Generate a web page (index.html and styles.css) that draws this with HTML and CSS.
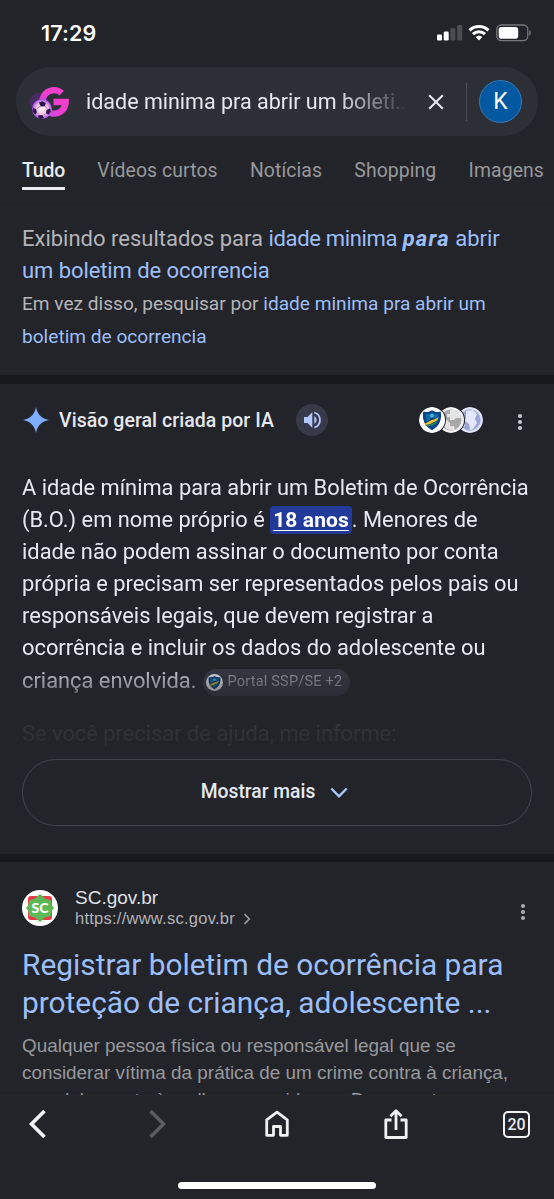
FILE: index.html
```html
<!DOCTYPE html>
<html lang="pt-BR">
<head>
<meta charset="utf-8">
<title>idade minima pra abrir um boletim de ocorrencia</title>
<link rel="stylesheet" href="styles.css">
</head>
<body>
<svg width="0" height="0" class="defs">
  <defs>
    <linearGradient id="pink" gradientUnits="userSpaceOnUse" x1="10" y1="34" x2="40" y2="4"><stop offset="0" stop-color="#b94cf0"/><stop offset=".5" stop-color="#ee3fd0"/><stop offset="1" stop-color="#f23fc4"/></linearGradient>
    <radialGradient id="ball"><stop offset="0" stop-color="#fff3f4"/><stop offset=".6" stop-color="#eebfe0"/><stop offset="1" stop-color="#a04be8"/></radialGradient>
    <symbol id="shield" viewBox="0 0 28 28">
      <circle cx="14" cy="14" r="14" fill="#fff"/>
      <path d="M14 3.400c3 1.900 5.700 2.200 9.500 1.800 1.400 8-1.500 15.800-9.500 19.800C6 21 3.100 13.200 4.500 5.200c3.800.4 6.500.1 9.500-1.800z" fill="#0b4389"/>
      <path d="M14 6c2.500 1.500 4.500 1.700 6.600 1.500.6 5.500-1.500 10.700-6.600 13.700-5.100-3-7.200-8.200-6.600-13.700C9.500 7.700 11.500 7.500 14 6z" fill="#0f6ba6"/>
      <circle cx="14" cy="9.500" r="2" fill="#4fbde3"/>
      <path d="M10 15l4-4 4 2-2 6-3 2z" fill="#0a3a75"/>
      <path d="M3.500 17.500c3 .8 5.500-.5 8-2.500 2.800-2 5.500-1 9.500-4-1 4.500-4 4.500-6.500 6s-7 3.500-11 .5z" fill="#f4c430"/>
      <path d="M5.500 19.500c4 .7 7-.5 9.500-2L19 15.500c-2 4-8.500 6.500-13.500 4z" fill="#239447"/>
    </symbol>
  </defs>
</svg>
<div class="screen">
  <header class="status">
    <span class="clock">17:29</span>
    <span class="indicators">
      <svg width="26" height="17" viewBox="0 0 26 17"><g fill="#fff"><rect x="0" y="10.500" width="5" height="6" rx="1.300"/><rect x="6.700" y="7.500" width="5" height="9" rx="1.300"/></g><g fill="#4c4d52"><rect x="13.400" y="4" width="5" height="12.500" rx="1.300"/><rect x="20.200" y="1" width="5" height="15.500" rx="1.300"/></g></svg>
      <svg class="wifi" width="22" height="17" viewBox="0 0 22 17"><g fill="none" stroke="#fff" stroke-width="3.100"><path d="M1.500 6.300a13.800 13.800 0 0 1 19 0"/><path d="M5 10.200a8.600 8.600 0 0 1 12 0"/></g><path d="M11 16.500l-3.300-3.400a4.800 4.800 0 0 1 6.600 0z" fill="#fff"/></svg>
      <svg class="battery" width="36" height="18" viewBox="0 0 36 18"><rect x=".8" y="1" width="31" height="15.600" rx="4.500" fill="none" stroke="#77787c" stroke-width="1.300"/><rect x="2.700" y="2.900" width="19.500" height="11.800" rx="2.800" fill="#fff"/><path d="M33.300 6.200c2 .6 2 4.600 0 5.200z" fill="#77787c"/></svg>
    </span>
  </header>

  <div class="search">
    <svg class="logo" width="42" height="36" viewBox="0 0 42 36">
      <circle cx="11" cy="18" r="9.500" fill="#65279b" opacity=".45"/>
      <path d="M33.800 9.200A11.700 11.700 0 1 0 37.700 18H25.500" fill="none" stroke="url(#pink)" stroke-width="6.300"/>
      <circle cx="14" cy="25" r="10" fill="url(#ball)"/>
      <g fill="#31134d" transform="translate(1 1)"><path d="M10 17.500l3.500-1.200 3.300 1.600-.8 3.300-4.500.2z"/><path d="M4 23l3 1 1 3.500-2 2-2.300-3z"/><path d="M17.500 25l3.500-1.500.8 3-2 3-2.800-1z"/><path d="M9.500 30l4 .3 1.500 2.700-3 1-2.800-1.600z"/></g>
      <path d="M12.500 22l-4 3M17 22l2.500 3M9 28.500l2 2.700M18 29.500l-3 2" stroke="#b884bc" fill="none"/>
    </svg>
    <span class="query">idade minima pra abrir um boleti...</span>
    <svg class="clear" width="16" height="16" viewBox="0 0 16 16"><path d="M1.200 1.200l13.600 13.600M14.800 1.200L1.200 14.800" stroke="#e6e8ef" stroke-width="2"/></svg>
    <span class="bar"></span>
    <span class="avatar">K</span>
  </div>

  <nav class="tabs">
    <span class="tab active">Tudo</span>
    <span class="tab">Vídeos curtos</span>
    <span class="tab">Notícias</span>
    <span class="tab">Shopping</span>
    <span class="tab">Imagens</span>
  </nav>

  <main class="content">
    <section class="correction">
      <p class="showing"><span class="line">Exibindo resultados para <a><span class="tight">idade minima</span> <b>para</b> abrir</a></span><a class="line second">um boletim de ocorrencia</a></p>
      <p class="instead"><span class="line">Em vez disso, pesquisar por <a>idade minima pra abrir um</a></span><a class="line">boletim de ocorrencia</a></p>
    </section>

    <section class="overview">
      <div class="ai-head">
        <svg width="26" height="26" viewBox="0 0 26 26"><path d="M13 0c1.500 7.500 5.500 11.500 13 13-7.500 1.500-11.500 5.500-13 13C11.500 18.500 7.500 14.500 0 13 7.500 11.500 11.500 7.500 13 0z" fill="#80adff"/></svg>
        <h2>Visão geral criada por IA</h2>
        <span class="speaker"><svg width="18" height="18" viewBox="0 0 18 18"><path d="M1 6h3.600L9.300 1.300v15.400L4.600 12H1z" fill="#b5c9ff"/><path d="M11.300 5a4.600 4.600 0 0 1 0 8z" fill="#b5c9ff"/><path d="M11.300 1.500a7.800 7.800 0 0 1 0 15" fill="none" stroke="#b5c9ff" stroke-width="1.800"/></svg></span>
        <span class="sources">
          <svg class="source" width="26" height="26"><use href="#shield"/></svg>
          <svg class="source" width="26" height="26" viewBox="0 0 26 26"><circle cx="13" cy="13" r="13" fill="#f2f2f2"/><circle cx="13" cy="13" r="10.500" fill="#a9a9a9"/><path d="M3 13h6l3 3v3h4l1 4c-6 1.500-13-3-14-10zM12 3h5l5 4 1 4h-5l-2 2h-4v-3h-3V7h3z" fill="#e4e4e4"/></svg>
          <svg class="source" width="26" height="26" viewBox="0 0 26 26"><circle cx="13" cy="13" r="13" fill="#dfe4fa"/><circle cx="13" cy="13" r="10.300" fill="#9aa5d1" stroke="#aab3db"/><path d="M9 4l7-1 4 4-2 5 2 4-4 6-3 1-1-6-4-3 1-4zM5 15l3 3-1 2-3-3z" fill="#e3e7fa"/></svg>
        </span>
        <svg class="dots" width="6" height="18" viewBox="0 0 6 18"><g fill="#c8cad1"><circle cx="3" cy="3" r="2.100"/><circle cx="3" cy="9" r="2.100"/><circle cx="3" cy="15" r="2.100"/></g></svg>
      </div>
      <div class="answer">
        <p>
          <span class="line">A idade mínima para abrir um Boletim de Ocorrência</span>
          <span class="line">(B.O.) em nome próprio é <mark>18 anos</mark>. Menores de</span>
          <span class="line">idade não podem assinar o documento por conta</span>
          <span class="line">própria e precisam ser representados pelos pais ou</span>
          <span class="line">responsáveis legais, que devem registrar a</span>
          <span class="line">ocorrência e incluir os dados do adolescente ou</span>
          <span class="line last">criança envolvida. <span class="chip"><svg width="17" height="17"><use href="#shield"/></svg>Portal SSP/SE +2</span></span>
        </p>
        <p class="followup">Se você precisar de ajuda, me informe:</p>
      </div>
      <div class="more">Mostrar mais<svg width="18" height="12" viewBox="0 0 18 12"><path d="M1.300 1.500L9 9.300l7.700-7.800" fill="none" stroke="#a8c7fa" stroke-width="2.400"/></svg></div>
    </section>

    <section class="result">
      <div class="site">
        <svg width="36" height="36" viewBox="0 0 36 36"><circle cx="18" cy="18" r="18" fill="#fff"/><rect x="6" y="6" width="24" height="24" rx="3" fill="#e83b46"/><path d="M18 4l5 4.500 6 2 .5 4.500L32 18l-2.500 3-.5 5-6 1.500-5 4.500-5-4.500L7 26l-.5-5L4 18l2.500-3L7 10.500l6-2z" fill="#5db954"/><text x="18" y="23" text-anchor="middle" class="badge">SC</text></svg>
        <div class="names">
          <span class="name">SC.gov.br</span>
          <span class="url">https://www.sc.gov.br<svg width="8" height="12" viewBox="0 0 8 12"><path d="M1.500 1.200L6.300 6l-4.800 4.800" fill="none" stroke="#989aa0" stroke-width="1.700"/></svg></span>
        </div>
        <svg class="dots" width="6" height="18" viewBox="0 0 6 18"><g fill="#a9abb0"><circle cx="3" cy="3" r="2.100"/><circle cx="3" cy="9" r="2.100"/><circle cx="3" cy="15" r="2.100"/></g></svg>
      </div>
      <h3><span class="line">Registrar boletim de ocorrência para</span><span class="line">proteção de criança, adolescente ...</span></h3>
      <p class="snippet"><span class="line">Qualquer pessoa física ou responsável legal que se</span><span class="line">considerar vítima da prática de um crime contra à criança,</span><span class="line">ao adolescente à mulher e aos idosos. Documentos</span></p>
    </section>
  </main>

  <footer class="toolbar">
    <div class="buttons">
      <svg width="24" height="30" viewBox="0 0 24 30"><path d="M19.500 2l-13 13 13 13" fill="none" stroke="#f1f1f4" stroke-width="3.600"/></svg>
      <svg class="forward" width="24" height="30" viewBox="0 0 24 30"><path d="M4.500 2l13 13-13 13" fill="none" stroke="#5c5d62" stroke-width="3.600"/></svg>
      <svg width="26" height="30" viewBox="0 0 26 30"><path d="M2.700 10.800L13 3.200l10.300 7.600v15.500h-6.800v-8.800h-7v8.800H2.700z" fill="none" stroke="#f1f1f4" stroke-width="2.800" stroke-linejoin="round"/></svg>
      <svg width="26" height="32" viewBox="0 0 26 32"><path d="M8.500 12H2.800v17.500h20.400V12h-5.700M13 22V3.500M7.500 8.300L13 2.800l5.500 5.500" fill="none" stroke="#f1f1f4" stroke-width="2.800" stroke-linejoin="round"/></svg>
      <span class="count">20</span>
    </div>
    <div class="home-bar"></div>
  </footer>
</div>
</body>
</html>
```
FILE: styles.css
```css
* { box-sizing: border-box; }
body { margin: 0; background: #232429; color: #e6e8f0; font-family: Roboto, "Noto Sans", sans-serif; }
p, h2, h3 { margin: 0; font-weight: 400; }
svg { display: block; flex: none; }
.defs { position: absolute; }
.screen { width: 554px; height: 1199px; display: flex; flex-direction: column; overflow: hidden; }
.line { display: block; white-space: nowrap; }

.status { height: 67px; flex: none; display: flex; justify-content: space-between; align-items: flex-start; padding: 21px 22px 0 41px; }
.clock { font: 600 21.500px/24px Inter, sans-serif; letter-spacing: .1px; color: #fff; }
.indicators { display: flex; padding-top: 3px; }
.wifi { margin-left: 5px; }
.battery { margin-left: 6px; }

.search { height: 69px; flex: none; margin: 0 16px; padding: 0 16px 0 12px; border-radius: 35px; background: #2c2f36; display: flex; align-items: center; }
.query { width: 321px; margin-left: 16px; font-size: 21.500px; line-height: 30px; white-space: nowrap; -webkit-mask-image: linear-gradient(90deg, #000 250px, transparent 324px); mask-image: linear-gradient(90deg, #000 250px, transparent 324px); }
.clear { margin-left: 21px; }
.bar { width: 1px; height: 38px; margin-left: 22px; background: #4b4f58; }
.avatar { width: 43px; height: 43px; margin-left: 12px; border: 1px solid #3a78b6; border-radius: 50%; background: #0358a2; font-size: 23px; line-height: 42px; text-align: center; color: #fff; }

.tabs { height: 68px; flex: none; padding: 18px 0 0 22px; display: flex; gap: 32.300px; border-bottom: 1px solid #202126; font-size: 19.400px; line-height: 33px; color: #97989d; white-space: nowrap; }
.tab { height: 36px; letter-spacing: .08px; }
.active { color: #e9ebf1; font-weight: 500; letter-spacing: -.2px; border-bottom: 3px solid #e9ebf1; }

.content { flex: 1; min-height: 0; overflow: hidden; }
a { color: #9dbffb; }
.correction { height: 171px; padding: 19px 22px 0; color: #b4b5b9; }
.showing { font-size: 22px; line-height: 32px; }
.showing .second { letter-spacing: -.08px; }
.tight { letter-spacing: -.33px; }
.showing b { font-style: italic; font-weight: 700; letter-spacing: 1.200px; }
.instead { font-size: 19.100px; line-height: 34px; }
.instead .line { height: 33px; }

.overview { height: 479px; border-top: 9px solid #17181c; padding: 0 22px; }
.ai-head { height: 72px; display: flex; align-items: center; padding-left: 1px; }
.ai-head h2 { margin-left: 10px; width: 216px; font-size: 19.500px; font-weight: 500; letter-spacing: .05px; white-space: nowrap; }
.speaker { width: 32px; height: 32px; margin-left: 20.500px; border-radius: 50%; background: #373b49; display: flex; align-items: center; justify-content: center; }
.sources { display: flex; margin-left: 91.500px; }
.source { border-radius: 50%; box-shadow: 0 0 0 1px #24252a; position: relative; }
.source:nth-child(1) { z-index: 3; }
.source:nth-child(2) { z-index: 2; }
.source + .source { margin-left: -7px; }
.ai-head .dots { margin-left: 34px; margin-top: 3px; }
.answer { height: 303px; padding-top: 16px; font-size: 21.850px; line-height: 32.100px; -webkit-mask-image: linear-gradient(#000 205px, rgba(0,0,0,.6) 226px, rgba(0,0,0,.08) 270px, rgba(0,0,0,.04)); mask-image: linear-gradient(#000 205px, rgba(0,0,0,.6) 226px, rgba(0,0,0,.08) 270px, rgba(0,0,0,.04)); }
.answer .line { height: 32.100px; }
mark { background: #223a9a; color: #fff; font-size: 21px; font-weight: 700; letter-spacing: .1px; text-decoration: underline; text-decoration-thickness: 1px; text-underline-offset: 3px; padding: 2px 3px; border-radius: 4px; }
.last { display: flex; align-items: center; }
.chip { display: flex; align-items: center; gap: 5px; height: 27px; width: 147px; margin: 3px 0 0 6px; padding-left: 3px; border-radius: 14px; background: #373b46; color: #a5a7af; font-size: 14.500px; letter-spacing: .2px; }
.followup { margin-top: 21px; }
.more { height: 67px; border: 1.500px solid #43444e; border-radius: 34px; display: flex; align-items: center; justify-content: center; gap: 15px; font-size: 19.300px; font-weight: 500; padding: 0 5px 3px 0; }
.more svg { margin-top: 4px; }

.result { border-top: 8px solid #17181c; padding: 25px 22px 0; }
.site { height: 42px; display: flex; align-items: center; }
.badge { font: 900 14px Lato, sans-serif; fill: #fff; }
.names { display: flex; flex-direction: column; margin-left: 17px; font-family: "Liberation Sans", Arial, sans-serif; }
.name { font-size: 19px; line-height: 21px; color: #dfe1e7; }
.url { display: flex; align-items: center; gap: 8px; font-size: 16.500px; line-height: 21px; letter-spacing: .25px; color: #b1b3b8; }
.site .dots { margin-left: auto; margin-right: 6px; margin-top: 8px; }
h3 { margin-top: 17px; font-size: 29.850px; line-height: 37.500px; color: #9dbffb; }
.snippet { margin-top: 11px; font: 18.900px/27px "Liberation Sans", Arial, sans-serif; color: #97989d; }

.toolbar { height: 104px; flex: none; background: #232429; border-top: 1px solid #26272b; }
.buttons { height: 56px; display: flex; justify-content: space-between; align-items: center; padding: 0 24px 0 25px; }
.forward { margin-left: 3px; }
.count { width: 27px; height: 27px; border: 2.500px solid #f1f1f4; border-radius: 5px; font-size: 16px; font-weight: 500; line-height: 23px; text-align: center; }
.home-bar { width: 198px; height: 7px; border-radius: 4px; margin: 30px auto 0; background: #fff; }
```
